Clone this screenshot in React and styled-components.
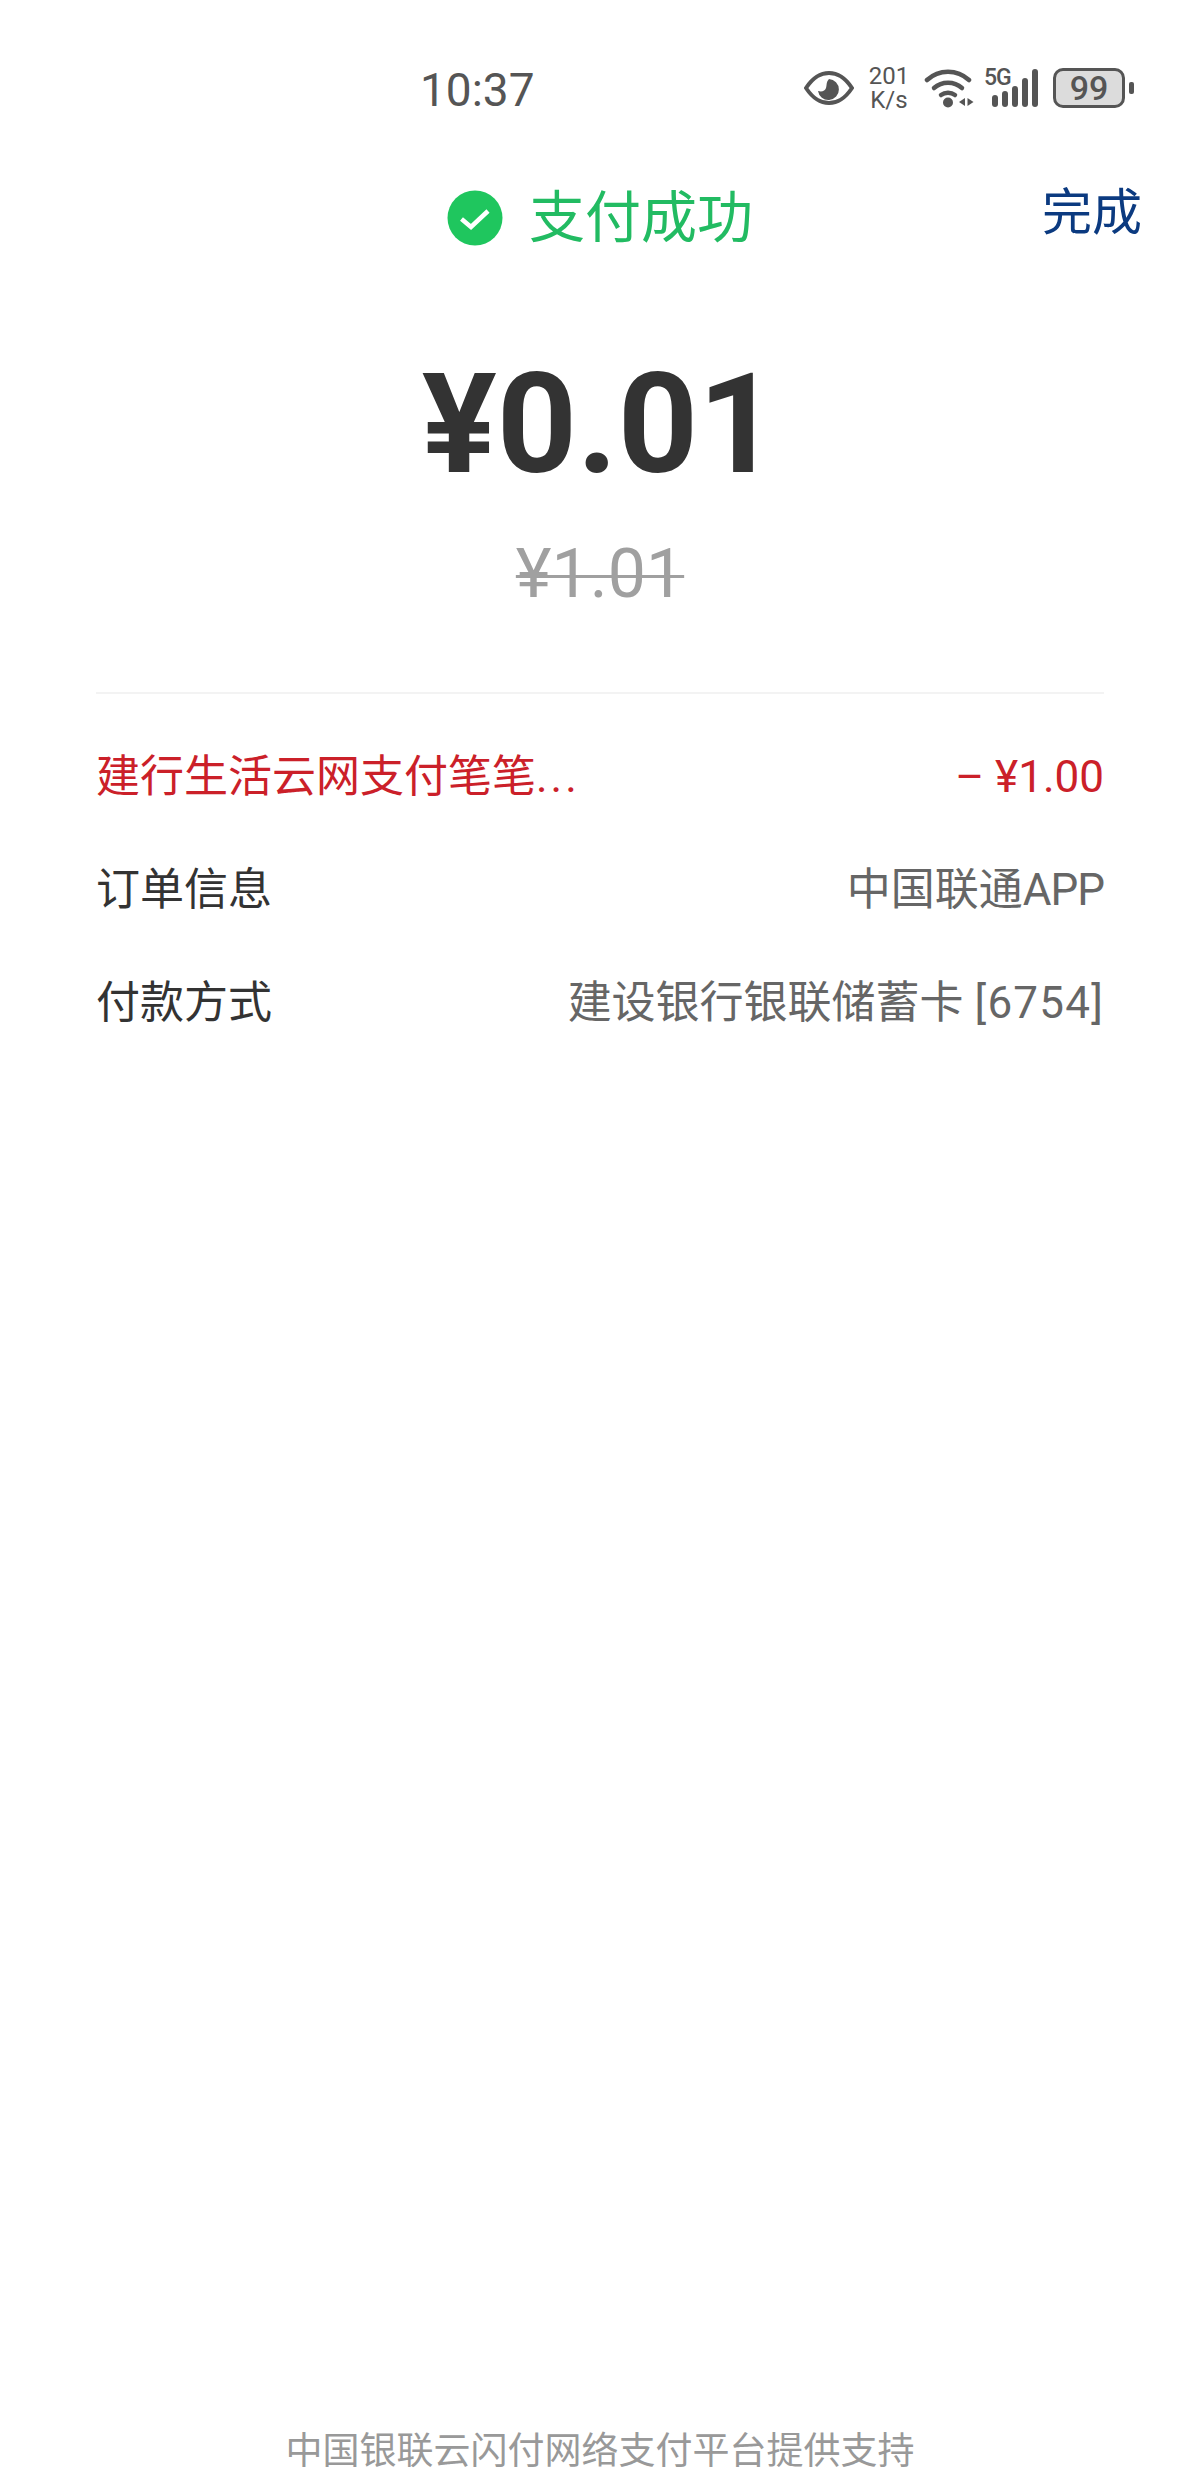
import React from 'react'
import styled, { createGlobalStyle } from 'styled-components'

const Global = createGlobalStyle`
  html, body { margin: 0; padding: 0; background: #fff; }
  body { font-family: Roboto, "Noto Sans CJK SC", sans-serif; }
`

const Page = styled.div`
  width: 1200px;
  height: 2489px;
  display: flex;
  flex-direction: column;
  background: #fff;
  overflow: hidden;
`

const StatusBar = styled.div`
  height: 60px;
  margin-top: 58px;
  padding: 0 66px 0 420px;
  display: flex;
  align-items: center;
  justify-content: space-between;
  color: #555;
`

const Time = styled.div`
  margin-top: 3px;
  font-size: 46px;
  line-height: 60px;
`

const StatusIcons = styled.div`
  display: flex;
  align-items: center;
`

const Speed = styled.div`
  width: 42px;
  margin: 0 14px 0 14px;
  font-size: 24px;
  line-height: 24px;
  text-align: center;
`

const Signal = styled.div`
  position: relative;
  width: 55px;
  height: 40px;
  margin: 0 14px 0 10px;
`

const FiveG = styled.span`
  position: absolute;
  left: 0;
  top: -2px;
  font-size: 23px;
  line-height: 24px;
  font-weight: 500;
  letter-spacing: -1px;
`

const Battery = styled.div`
  width: 72px;
  height: 40px;
  box-sizing: border-box;
  border: 3px solid #555;
  border-radius: 10px;
  background: #dcdcdc;
  display: flex;
  align-items: center;
  justify-content: center;
  font-size: 34px;
  font-weight: 500;
`

const BatteryNub = styled.div`
  width: 5px;
  height: 12px;
  margin-left: 4px;
  border-radius: 2px;
  background: #555;
`

const Header = styled.div`
  display: grid;
  grid-template-columns: 1fr auto 1fr;
  align-items: center;
  height: 70px;
  margin-top: 65px;
`

const Title = styled.div`
  grid-column: 2;
  display: flex;
  align-items: center;
  gap: 26px;
  font-size: 56px;
  line-height: 70px;
  color: #22bb62;
`

const Done = styled.div`
  justify-self: end;
  margin: -10px 58px 0 0;
  font-size: 50px;
  line-height: 70px;
  color: #0b3a80;
`

const Amount = styled.div`
  margin-top: 89px;
  font-size: 140px;
  line-height: 164px;
  font-weight: 700;
  color: #333;
  text-align: center;
`

const OldAmount = styled.div`
  margin-top: 28px;
  font-size: 68px;
  line-height: 80px;
  color: #a0a0a0;
  text-align: center;
  text-decoration: line-through;
  text-decoration-thickness: 3px;
`

const Divider = styled.div`
  height: 2px;
  margin: 78px 96px 0;
  background: #f3f3f3;
`

const List = styled.div`
  margin-top: 55px;
  padding: 0 96px;
  display: flex;
  flex-direction: column;
  gap: 57px;
`

const Row = styled.div`
  display: flex;
  justify-content: space-between;
  font-size: 44px;
  line-height: 56px;
  color: ${(p) => (p.$red ? '#cb2029' : '#666')};
`

const Label = styled.span`
  color: ${(p) => (p.$red ? '#cb2029' : '#333')};
`

const Spaced = styled.span`
  letter-spacing: ${(p) => p.$gap}px;
`

const Footer = styled.div`
  margin-top: auto;
  padding-bottom: 12px;
  font-size: 37px;
  line-height: 50px;
  color: #999;
  text-align: center;
`

const Check = () => (
  <svg width="56" height="56" viewBox="0 0 56 56">
    <circle cx="28" cy="28" r="27.5" fill="#1fc65e" />
    <path d="M14.5 29 L24 37 L41 21" fill="none" stroke="#fff" strokeWidth="4.5" />
  </svg>
)

const Eye = () => (
  <svg width="50" height="34" viewBox="0 0 50 34">
    <path d="M2 17 C10 5 17 2 25 2 C33 2 40 5 48 17 C40 29 33 32 25 32 C17 32 10 29 2 17 Z" fill="none" stroke="#555" strokeWidth="4" />
    <path d="M25 8 A10.5 10.5 0 1 1 14 20 C18 21 21 20 22 17 C23 14 22 11 25 8 Z" fill="#555" />
  </svg>
)

const Wifi = () => (
  <svg width="50" height="40" viewBox="0 0 50 40">
    <g fill="none" stroke="#555" strokeWidth="4.5" strokeLinecap="round">
      <path d="M3 12 C15 1 33 1 45 12" />
      <path d="M10 20 C18 13 30 13 38 20" />
      <path d="M17 27 C21 24 27 24 31 27" />
    </g>
    <circle cx="24" cy="34.5" r="5" fill="#555" />
    <path d="M41 30 L41 38 L35 34 Z M43.5 30 L43.5 38 L49.5 34 Z" fill="#555" />
  </svg>
)

const Bars = () => (
  <svg width="55" height="40" viewBox="0 0 55 40" style={{ display: 'block' }}>
    <g fill="#555">
      <rect x="8" y="27" width="6" height="12" rx="3" />
      <rect x="18" y="23" width="6" height="16" rx="3" />
      <rect x="28" y="18" width="6" height="21" rx="3" />
      <rect x="38" y="10" width="6" height="29" rx="3" />
      <rect x="48" y="1" width="6" height="38" rx="3" />
    </g>
  </svg>
)

export default function App() {
  return (
    <Page>
      <Global />
      <StatusBar>
        <Time>10:37</Time>
        <StatusIcons>
          <Eye />
          <Speed>201<br />K/s</Speed>
          <Wifi />
          <Signal>
            <Bars />
            <FiveG>5G</FiveG>
          </Signal>
          <Battery>99</Battery>
          <BatteryNub />
        </StatusIcons>
      </StatusBar>
      <Header>
        <Title><Check />支付成功</Title>
        <Done>完成</Done>
      </Header>
      <Amount>¥0.01</Amount>
      <OldAmount>¥1.01</OldAmount>
      <Divider />
      <List>
        <Row $red><Label $red>建行生活云网支付笔笔<Spaced $gap={3}>...</Spaced></Label><span>– ¥1.00</span></Row>
        <Row><Label>订单信息</Label><span>中国联通<Spaced $gap={-1}>APP</Spaced></span></Row>
        <Row><Label>付款方式</Label><span>建设银行银联储蓄卡 <Spaced $gap={1.2}>[6754]</Spaced></span></Row>
      </List>
      <Footer>中国银联云闪付网络支付平台提供支持</Footer>
    </Page>
  )
}
